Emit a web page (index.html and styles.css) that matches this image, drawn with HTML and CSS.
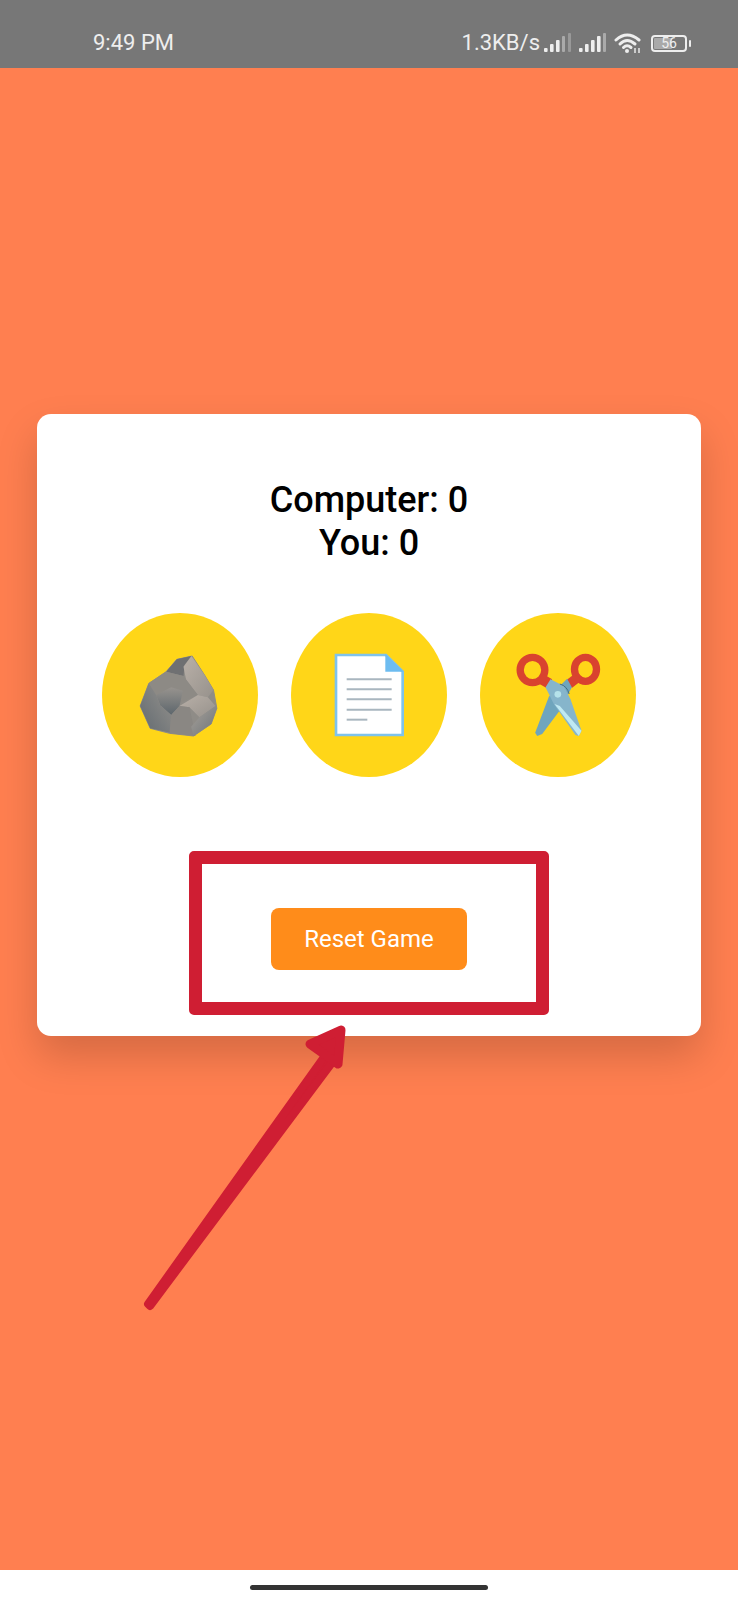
FILE: index.html
```html
<!DOCTYPE html>
<html lang="en">
<head>
<meta charset="utf-8">
<title>Rock Paper Scissors</title>
<link rel="stylesheet" href="styles.css">
</head>
<body>
<div class="phone">
  <header class="status">
    <span class="time">9:49 PM</span>
    <div class="status-right">
      <span class="speed">1.3KB/s</span>
      <svg class="signal" viewBox="0 0 27 20"><rect x="0" y="15" width="3.6" height="4" rx="1" fill="#eee"/><rect x="6" y="11" width="3.6" height="8" rx="1" fill="#eee"/><rect x="12" y="7" width="3.6" height="12" rx="1" fill="#eee"/><rect x="18" y="3" width="3" height="16" rx="1" fill="#aaa"/><rect x="24" y="0" width="3" height="19" rx="1" fill="#999"/></svg>
      <svg class="signal" viewBox="0 0 27 20"><rect x="0" y="15" width="3.6" height="4" rx="1" fill="#eee"/><rect x="6" y="11" width="3.6" height="8" rx="1" fill="#eee"/><rect x="12" y="7" width="3.6" height="12" rx="1" fill="#eee"/><rect x="18" y="3" width="3.6" height="16" rx="1" fill="#eee"/><rect x="24" y="0" width="3" height="19" rx="1" fill="#aaa"/></svg>
      <svg class="wifi" viewBox="0 0 28 20"><g fill="none" stroke="#eee" stroke-width="3" stroke-linecap="round"><path d="M2 7 Q13 -3 25 7"/><path d="M6 11 Q13 4 21 11"/><path d="M9.5 14.5 Q13 11 17 14.5"/></g><circle cx="13" cy="18" r="2" fill="#eee"/><rect x="20" y="15" width="2" height="5" fill="#ccc"/><rect x="24" y="15" width="2" height="5" fill="#ccc"/></svg>
      <div class="battery"><div class="battery-body"><div class="battery-fill"></div><span class="battery-num">56</span></div><div class="battery-nub"></div></div>
    </div>
  </header>

  <main class="stage">
    <section class="card">
      <h1 class="score">Computer: 0<br>You: 0</h1>
      <div class="choices">
        <div class="choice">
          <svg class="choice-icon" viewBox="136.5 150 270 270">
            <defs>
              <linearGradient id="rockA" x1="0" y1="0" x2="0" y2="1"><stop offset="0" stop-color="#97938e"/><stop offset="1" stop-color="#5d666c"/></linearGradient>
              <linearGradient id="rockB" x1="0" y1="0" x2="1" y2="1"><stop offset="0" stop-color="#b9b0a8"/><stop offset="1" stop-color="#97928c"/></linearGradient>
              <linearGradient id="rockC" x1="1" y1="0" x2="0" y2="1"><stop offset="0" stop-color="#96938e"/><stop offset="1" stop-color="#626a70"/></linearGradient>
              <linearGradient id="rockD" x1="0" y1="0" x2="1" y2="1"><stop offset="0" stop-color="#a8a29b"/><stop offset="1" stop-color="#6d7377"/></linearGradient>
            </defs>
            <path d="M262 178 L308 168 L345 225 L372 270 L382 325 L365 372 L312 408 L240 400 L182 385 L152 318 L178 250 L230 215 Z" fill="#8f8c87" stroke="#8f8c87" stroke-width="3" stroke-linejoin="round"/>
            <polygon points="262,178 306,168 285,195 282,228 230,215" fill="#6f7072"/>
            <polygon points="306,168 345,225 372,270 355,292 325,285 290,240 282,200" fill="url(#rockB)"/>
            <polygon points="230,215 282,228 325,285 278,305 245,345 200,285 178,250" fill="#8d8a85"/>
            <polygon points="200,285 245,262 280,272 270,318 245,345 212,316" fill="url(#rockA)"/>
            <polygon points="178,250 200,285 212,316 245,345 242,398 182,385 152,318" fill="url(#rockC)"/>
            <polygon points="270,318 325,285 355,292 378,318 330,352 300,322" fill="url(#rockB)"/>
            <polygon points="245,345 270,318 300,322 318,408 240,400" fill="#8a8783"/>
            <polygon points="330,352 378,318 382,325 365,372 312,408 305,380" fill="url(#rockD)"/>
          </svg>
        </div>
        <div class="choice">
          <svg class="choice-icon" viewBox="132 150 270 270">
            <polygon points="168,165 318,165 368,215 368,405 168,405" fill="#fff" stroke="#7ec3ec" stroke-width="8"/>
            <polygon points="316,163 372,215 316,215" fill="#6dbcf0"/>
            <g stroke="#a9b6bf" stroke-width="6"><line x1="200" y1="238" x2="335" y2="238"/><line x1="200" y1="268" x2="335" y2="268"/><line x1="200" y1="298" x2="335" y2="298"/><line x1="200" y1="329" x2="335" y2="329"/><line x1="200" y1="359" x2="262" y2="359"/></g>
          </svg>
        </div>
        <div class="choice">
          <svg class="choice-icon" viewBox="127.5 150 270 270">
            <ellipse cx="186" cy="210" rx="37" ry="38" fill="none" stroke="#d9432f" stroke-width="22"/>
            <ellipse cx="345" cy="208" rx="33" ry="36" fill="none" stroke="#d9432f" stroke-width="22"/>
            <polygon points="195,245 218,222 245,238 228,264" fill="#d9432f"/>
            <polygon points="335,240 312,222 288,240 304,264" fill="#d9432f"/>
            <polygon points="290,236 304,262 265,335 215,402 200,408 194,398 235,290" fill="#6fa5bd"/>
            <polygon points="240,238 225,262 250,312 315,405 325,408 333,392 300,298 280,258" fill="#86b5cb"/>
            <polygon points="252,312 268,318 333,392 325,408" fill="#bfe9f2"/>
            <path d="M268 252 Q290 258 296 282" fill="none" stroke="#456f85" stroke-width="3"/>
            <circle cx="262" cy="283" r="10" fill="#b5e2ea"/>
          </svg>
        </div>
      </div>
      <div class="reset-wrap">
        <button class="reset" type="button">Reset Game</button>
        <div class="highlight"></div>
      </div>
    </section>
  </main>

  <footer class="nav"><div class="home"></div></footer>

  <svg class="arrow" viewBox="0 0 738 1600">
    <polygon points="148,1304 150,1306 337,1056 329,1050" fill="#cf1e33" stroke="#cf1e33" stroke-width="8" stroke-linejoin="round"/>
    <polygon points="341,1030 310,1044 338,1064" fill="#cf1e33" stroke="#cf1e33" stroke-width="9" stroke-linejoin="round"/>
  </svg>
</div>
</body>
</html>
```

FILE: styles.css
```css
* { box-sizing: border-box; }
html, body { margin: 0; padding: 0; }
body { font-family: Roboto, "Liberation Sans", sans-serif; }

.phone {
  position: relative;
  width: 738px;
  height: 1600px;
  display: flex;
  flex-direction: column;
  background: #ff7f50;
  overflow: hidden;
}

.status {
  height: 68px;
  flex: none;
  background: #777;
  color: #eee;
  display: flex;
  align-items: flex-end;
  justify-content: space-between;
  padding: 0 47px 13px 93px;
  font-size: 22px;
  line-height: 24px;
}
.status-right { display: flex; align-items: center; }
.speed { margin-right: 4px; }
.signal { width: 27px; height: 20px; margin-right: 8px; }
.wifi { width: 28px; height: 20px; margin-right: 9px; }
.battery { display: flex; align-items: center; }
.battery-body {
  position: relative;
  width: 36px;
  height: 17px;
  border: 2px solid #eee;
  border-radius: 4px;
  display: flex;
  align-items: center;
  justify-content: center;
}
.battery-fill {
  position: absolute;
  left: 1px; top: 1px; bottom: 1px;
  width: 18px;
  background: #a9a9a9;
  border-radius: 1px;
}
.battery-num { position: relative; font-size: 14px; line-height: 13px; color: #eee; }
.battery-nub { width: 2px; height: 7px; margin-left: 2px; background: #eee; border-radius: 1px; }

.stage { flex: 1; padding: 346px 37px 0; }

.card {
  width: 664px;
  height: 622px;
  background: #fff;
  border-radius: 14px;
  box-shadow: 0 20px 40px rgba(0, 0, 0, 0.17);
  padding-top: 65px;
  display: flex;
  flex-direction: column;
  align-items: center;
}
.score {
  margin: 0;
  font-size: 36px;
  line-height: 43px;
  font-weight: 500;
  color: #000;
  text-align: center;
}
.choices { display: flex; gap: 33px; margin-top: 48px; }
.choice {
  width: 156px;
  height: 164px;
  border-radius: 50%;
  background: #ffd618;
  display: flex;
  align-items: center;
  justify-content: center;
}
.choice-icon { width: 90px; height: 90px; display: block; }

.reset-wrap { position: relative; margin-top: 131px; }
.reset {
  display: block;
  width: 196px;
  height: 62px;
  border: 0;
  border-radius: 8px;
  background: #ff8c1a;
  color: #fff;
  font: 400 24px Roboto, sans-serif;
}
.highlight {
  position: absolute;
  left: -82px; right: -82px; top: -57px; bottom: -45px;
  border: 13px solid #cf1e33;
  border-radius: 5px;
}

.nav {
  height: 30px;
  flex: none;
  background: #fff;
  display: flex;
  justify-content: center;
  padding-top: 15px;
}
.home { width: 238px; height: 5px; border-radius: 3px; background: #333; }

.arrow { position: absolute; left: 0; top: 0; width: 738px; height: 1600px; pointer-events: none; }
```
